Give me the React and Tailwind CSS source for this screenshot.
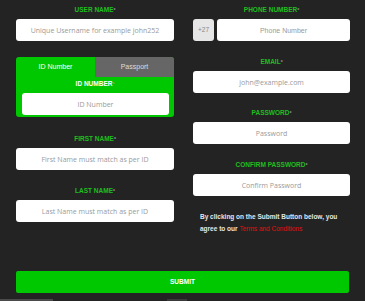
import React from "react";

const labelCls =
  "h-[8px] leading-[8px] text-center text-[6.5px] font-bold text-[#1fbf1f] mb-[5px]";
const inputCls =
  "block w-full h-[22px] rounded-[3px] bg-white text-center text-[7px] text-[#333] placeholder:text-[#9a9a9a] outline-none border-0";
const fontInput = { fontFamily: '"Open Sans", "Liberation Sans", sans-serif' };

function Label({ children, white }) {
  return (
    <div
      className={labelCls + (white ? " !text-white" : "")}
      style={{ fontFamily: '"Liberation Sans", Arial, sans-serif' }}
    >
      {children}
      <span className="text-[#9a9a9a] text-[5px] align-top">*</span>
    </div>
  );
}

function Field({ label, placeholder, type = "text" }) {
  return (
    <div className="flex flex-col">
      <Label>{label}</Label>
      <input className={inputCls} style={fontInput} placeholder={placeholder} type={type} />
    </div>
  );
}

export default function App() {
  return (
    <div className="w-[365px] h-[301px] bg-[#232323] flex flex-col overflow-hidden">
      <div className="px-[16px] pt-[6px] grid grid-cols-[158px_157px] gap-x-[19px]">
        {/* Left column */}
        <div className="flex flex-col">
          <Field label="USER NAME" placeholder="Unique Username for example john252" />
          <div className="mt-[16px] rounded-[3px] bg-[#00c800] flex flex-col pb-[2px]">
            <div className="flex h-[20px]">
              <div
                className="flex-1 flex items-center justify-center text-[7px] text-white"
                style={{ fontFamily: '"Liberation Sans", Arial, sans-serif' }}
              >
                ID Number
              </div>
              <div
                className="flex-1 flex items-center justify-center text-[7px] text-[#dddddd] bg-[#666666] rounded-tr-[3px]"
                style={{ fontFamily: '"Liberation Sans", Arial, sans-serif' }}
              >
                Passport
              </div>
            </div>
            <div className="mt-[3px]">
              <Label white>ID NUMBER</Label>
            </div>
            <div className="pl-[6px] pr-[5px] -mt-[0px]">
              <input className={inputCls} style={fontInput} placeholder="ID Number" />
            </div>
          </div>
          <div className="mt-[18px]">
            <Field label="FIRST NAME" placeholder="First Name must match as per ID" />
          </div>
          <div className="mt-[17px]">
            <Field label="LAST NAME" placeholder="Last Name must match as per ID" />
          </div>
        </div>

        {/* Right column */}
        <div className="flex flex-col">
          <div className="flex flex-col">
            <Label>PHONE NUMBER</Label>
            <div className="flex gap-[3px]">
              <div
                className="w-[21px] h-[22px] shrink-0 rounded-[3px] bg-[#e6e6e6] flex items-center justify-center text-[6.5px] text-[#888]"
                style={{ fontFamily: '"Liberation Sans", Arial, sans-serif' }}
              >
                +27
              </div>
              <input
                className={inputCls}
                style={{ fontFamily: '"Liberation Sans", Arial, sans-serif' }}
                placeholder="Phone Number"
              />
            </div>
          </div>
          <div className="mt-[17px]">
            <Field label="EMAIL" placeholder="john@example.com" />
          </div>
          <div className="mt-[16px]">
            <Field label="PASSWORD" placeholder="Password" type="password" />
          </div>
          <div className="mt-[17px]">
            <Field label="CONFIRM PASSWORD" placeholder="Confirm Password" type="password" />
          </div>
          <div
            className="mt-[15px] pl-[7px] text-[6.5px] leading-[12px] font-bold text-[#e6e6e6]"
            style={{ fontFamily: '"Liberation Sans", Arial, sans-serif' }}
          >
            <div>By clicking on the Submit Button below, you</div>
            <div>
              agree to our <span className="font-normal text-[#e01010]">Terms and Conditions</span>
            </div>
          </div>
        </div>
      </div>

      <div className="px-[16px] mt-[36px]">
        <button
          className="w-[333px] h-[22px] rounded-[2px] bg-[#00c800] text-white text-[6.5px] font-bold flex items-center justify-center"
          style={{ fontFamily: '"Liberation Sans", Arial, sans-serif' }}
        >
          SUBMIT
        </button>
      </div>
      <div className="mt-auto h-[2px] flex">
        <div className="w-[53px] bg-[#4a4a4a]" />
        <div className="w-[114px]" />
        <div className="w-[20px] bg-[#3a3a3a]" />
      </div>
    </div>
  );
}
